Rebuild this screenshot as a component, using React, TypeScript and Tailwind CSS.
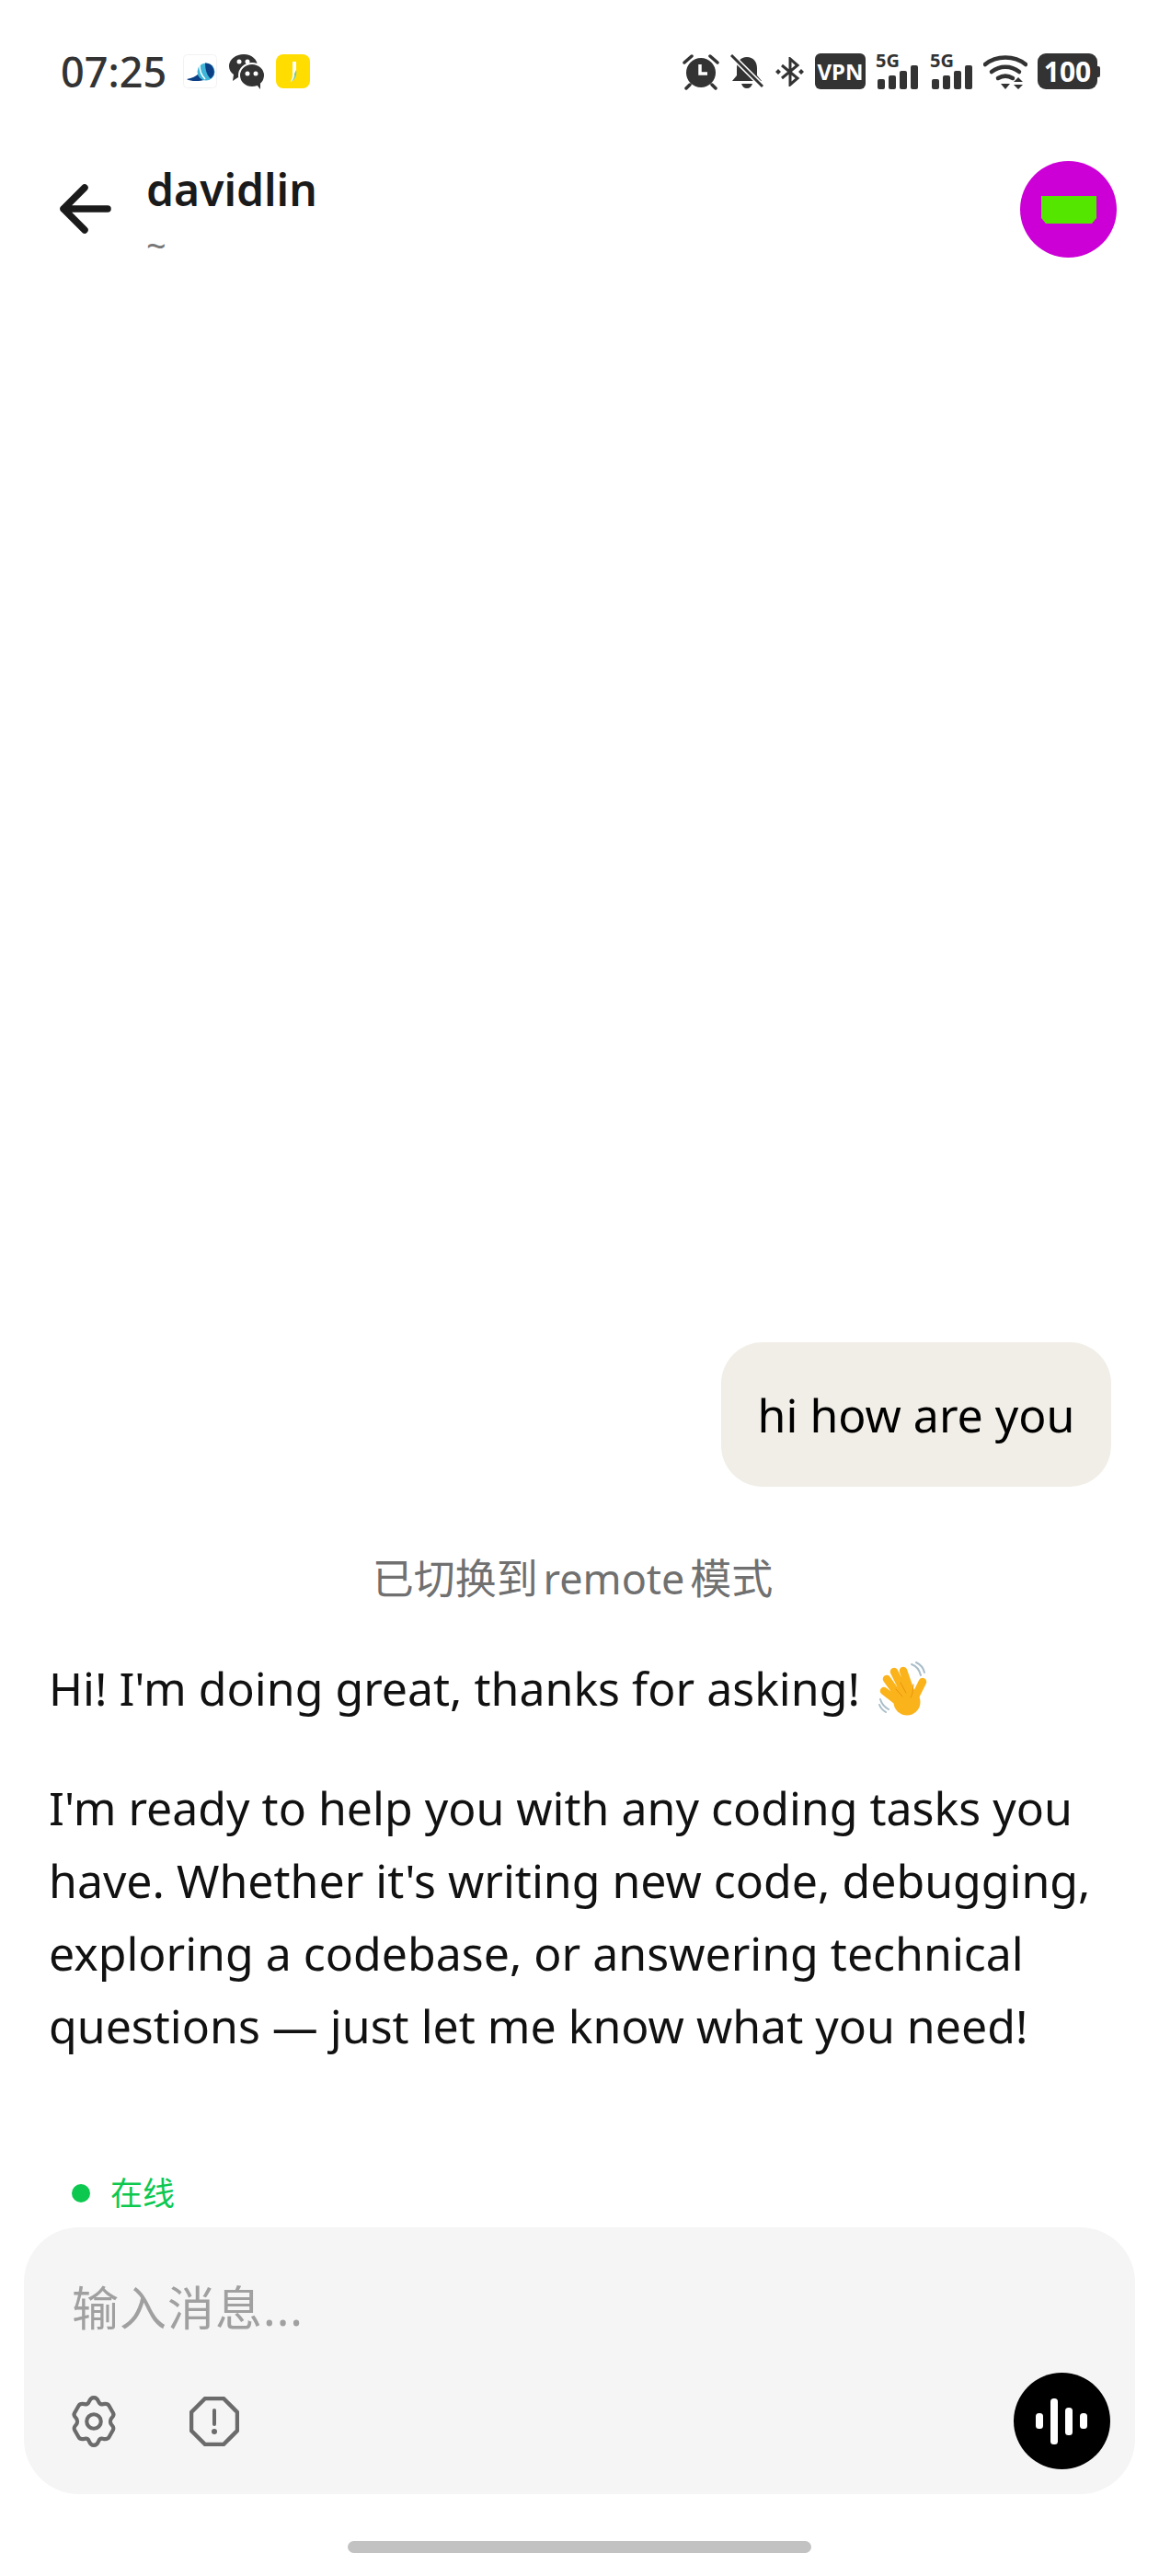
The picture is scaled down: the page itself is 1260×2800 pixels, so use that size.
const sans = "font-['Noto_Sans','Noto_Sans_CJK_SC',sans-serif]";

function StatusIcons() {
  return (
    <div className="flex items-center text-[#333]">
      <svg className="h-[40px] w-[40px]" viewBox="0 0 40 40">
        <circle cx="20" cy="21" r="16" fill="#333" />
        <path d="M19 12v10h8" fill="none" stroke="#fff" strokeWidth="3.5" />
        <path d="M2 10l8-7M38 10l-8-7M8 34l-4 4M32 34l4 4" stroke="#333" strokeWidth="3.5" strokeLinecap="round" />
      </svg>
      <svg className="ml-[12px] h-[38px] w-[36px]" viewBox="0 0 36 38">
        <path d="M18 3c7 0 11 5 11 12v8l5 6H2l5-6v-8C7 8 11 3 18 3z" fill="#333" />
        <path d="M12 32h12c-1 3-3 5-6 5s-5-2-6-5z" fill="#333" />
        <path d="M1 1l34 34" stroke="#fff" strokeWidth="6" />
        <path d="M1 1l34 34" stroke="#333" strokeWidth="3" />
      </svg>
      <svg className="ml-[12px] h-[32px] w-[33px]" viewBox="0 0 33 32">
        <path d="M8 9l17 14-8 7V2l8 7L8 23" fill="none" stroke="#333" strokeWidth="3" />
        <path d="M1 16l3-3 3 3-3 3zM26 16l3-3 3 3-3 3z" fill="#333" />
      </svg>
      <div className={`ml-[11px] flex h-[39px] w-[55px] items-center justify-center rounded-[6px] bg-[#333] text-[24px] font-bold text-white ${sans}`}>
        VPN
      </div>
      <Signal className="ml-[11px]" />
      <Signal className="ml-[12px]" />
      <svg className="ml-[11px] h-[40px] w-[48px]" viewBox="0 0 48 40">
        <path d="M2 12C14 2 34 2 46 12" fill="none" stroke="#333" strokeWidth="4.500" strokeLinecap="round" />
        <path d="M9 20c9-7 21-7 30 0" fill="none" stroke="#333" strokeWidth="4.500" strokeLinecap="round" />
        <path d="M16 27c5-3 11-3 16 0" fill="none" stroke="#333" strokeWidth="4.500" strokeLinecap="round" />
        <path d="M19 33h10l-5 6zM38 26l5 5H33zM38 39l5-5H33z" fill="#333" />
      </svg>
      <div className="ml-[11px] flex items-center">
        <div className={`flex h-[39px] w-[65px] items-center justify-center rounded-[9px] bg-[#333] text-[30px] font-bold text-white ${sans}`}>
          100
        </div>
        <div className="h-[12px] w-[3px] rounded-r-[2px] bg-[#333]" />
      </div>
    </div>
  );
}

function Signal({ className }: { className: string }) {
  return (
    <div className={`relative h-[39px] w-[47px] ${className}`}>
      <span className={`absolute left-0 top-[-3px] text-[20px] leading-[22px] font-bold text-[#333] ${sans}`}>5G</span>
      <div className="absolute inset-x-0 bottom-0 flex items-end gap-[4px] pl-[2px]">
        <div className="h-[11px] w-[8px] rounded-[2px] bg-[#333]" />
        <div className="h-[15px] w-[8px] rounded-[2px] bg-[#333]" />
        <div className="h-[20px] w-[8px] rounded-[2px] bg-[#333]" />
        <div className="h-[26px] w-[8px] rounded-[2px] bg-[#333]" />
      </div>
    </div>
  );
}

function NotificationIcons() {
  return (
    <div className="ml-[18px] flex items-center gap-[13px]">
      <svg className="h-[37px] w-[37px]" viewBox="0 0 37 37">
        <rect x="0.500" y="0.500" width="36" height="36" rx="4" fill="#fff" stroke="#f2f2f2" />
        <path d="M4 27c6-1 10-3 13-6l6 7c-3 1-15 2-19-1z" fill="#0b3f86" />
        <circle cx="25" cy="19" r="9.500" fill="#3fb6d8" />
        <path d="M24 9.500a9.500 9.500 0 0 1 6 17c-4-3-6-10-6-17z" fill="#0b3f86" />
        <path d="M18 12c0 5 2 11 6 15" fill="none" stroke="#fff" strokeWidth="1.500" />
      </svg>
      <svg className="h-[38px] w-[38px]" viewBox="0 0 38 38">
        <path d="M16 0C7 0 0 6 0 13c0 4 2 7 5 9l-1 7 6-4c2 1 4 1 6 1 9 0 15-6 15-13S25 0 16 0z" fill="#333" />
        <ellipse cx="25" cy="23" rx="14" ry="13" fill="#333" stroke="#fff" strokeWidth="2" />
        <path d="M30 33l4 5v-7z" fill="#333" />
        <circle cx="11" cy="8" r="2.500" fill="#fff" />
        <circle cx="20" cy="8" r="2.500" fill="#fff" />
        <circle cx="20" cy="21" r="2.500" fill="#fff" />
        <circle cx="29" cy="21" r="2.500" fill="#fff" />
      </svg>
      <svg className="h-[37px] w-[37px]" viewBox="0 0 37 37">
        <rect width="37" height="37" rx="8" fill="#ffdd00" />
        <path d="M18 8h4v12c0 5-2 8-6 10 1-3 2-4 2-8z" fill="#fff" />
        <path d="M22 17c1 6-1 11-6 13 3-2 4-5 4-9z" fill="#7cc7a0" />
      </svg>
    </div>
  );
}

function WaveHand() {
  return (
    <svg className="ml-[20px] h-[60px] w-[54px] shrink-0" viewBox="28 15 54 60">
      <path d="M64 18q8 3 10 12M69 16q7 3 9 11M30 56q2 7 9 11M29 62q2 5 7 8" fill="none" stroke="#a9bdc9" strokeWidth="2" strokeLinecap="round" />
      <g fill="none" stroke="#fbb31c" strokeWidth="8.500" strokeLinecap="round">
        <path d="M34 47l18 14M37 34l15 21M45 26l12 24M55 25l8 23M76 37l-9 18" />
      </g>
      <circle cx="59" cy="59" r="14.500" fill="#fbb31c" />
      <path d="M47 45l7 8M52 38l6 11M66 40c-1 6 0 9-3 14" fill="none" stroke="#e8920c" strokeWidth="1" strokeLinecap="round" />
    </svg>
  );
}

export default function App() {
  return (
    <div className={`flex h-[2800px] w-[1260px] flex-col overflow-hidden bg-white ${sans}`}>
      <div className="flex h-[155px] shrink-0 items-center pl-[66px] pr-[64px]">
        <div className="flex items-center">
          <span className="text-[45px] font-medium leading-none text-[#333]">07:25</span>
          <NotificationIcons />
        </div>
        <div className="ml-auto">
          <StatusIcons />
        </div>
      </div>

      <div className="flex h-[145px] shrink-0 items-start pl-[62px] pr-[46px]">
        <svg className="mt-[41px] h-[60px] w-[60px]" viewBox="0 0 60 60" fill="none" stroke="#1a1a1a" strokeWidth="7.500" strokeLinecap="round" strokeLinejoin="round">
          <path d="M55 31H7M30 8L7 31l23 23" />
        </svg>
        <div className="ml-[37px] flex flex-col">
          <span className="mt-[20px] text-[48px] font-semibold leading-[62px] text-[#1a1a1a]">davidlin</span>
          <span className="mt-[14px] text-[38px] leading-[30px] text-[#777]">~</span>
        </div>
        <div className="ml-auto mt-[20px] flex h-[105px] w-[105px] items-center justify-center rounded-full bg-[#cc00d6]">
          <svg className="h-[30px] w-[60px]" viewBox="0 0 60 30">
            <path d="M0 0h60v24l-5 6H5l-5-6z" fill="#55e600" />
          </svg>
        </div>
      </div>

      <div className="flex flex-1 flex-col justify-end pl-[53px] pr-[52px]">
        <div className="flex justify-end">
          <div className="flex h-[157px] w-[424px] items-center justify-center rounded-[45px] bg-[#f1eee7] text-[50px] leading-none text-black">
            hi how are you
          </div>
        </div>
        <div className="mt-[78px] pr-[16px] text-center text-[45px] leading-[44px] text-[#707070] [word-spacing:-6px]">
          已切换到 remote 模式
        </div>
        <div className="mt-[58px] flex items-center text-[50px] leading-[79px] text-[#111]">
          Hi! I'm doing great, thanks for asking!
          <WaveHand />
        </div>
        <p className="mt-[51px] text-[50px] leading-[79px] text-[#111]">
          I'm ready to help you with any coding tasks you
          <br />
          have. Whether it's writing new code, debugging,
          <br />
          exploring a codebase, or answering technical
          <br />
          questions — just let me know what you need!
        </p>
        <div className="ml-[25px] mt-[119px] flex items-center">
          <div className="h-[20px] w-[20px] rounded-full bg-[#0cc84f]" />
          <span className="ml-[22px] text-[35px] leading-[46px] text-[#0cc84f]">在线</span>
        </div>
      </div>

      <div className="mx-[26px] mt-[14px] flex h-[290px] shrink-0 flex-col rounded-[60px] bg-[#f5f5f5] pl-[52px] pr-[27px]">
        <div className="mt-[58px] text-[51px] leading-[58px] tracking-[1px] text-[#a0a0a0]">输入消息...</div>
        <div className="mt-[42px] flex items-center">
          <svg className="-ml-[7px] h-[62px] w-[62px]" viewBox="0 0 24 24" fill="none" stroke="#6b6b6b" strokeWidth="1.600" strokeLinejoin="round">
            <path d="M12 2c1 0 1.700.9 2 1.700.3.800 1.100 1.200 1.900 1 .9-.2 2-.2 2.500.7l1.700 3c.5.800-.1 1.700-.7 2.300-.6.700-.6 1.900 0 2.600.6.600 1.200 1.500.7 2.300l-1.700 3c-.5.900-1.600.9-2.500.7-.8-.2-1.600.2-1.900 1-.3.800-1 1.700-2 1.700s-1.700-.9-2-1.700c-.3-.8-1.100-1.200-1.900-1-.9.200-2 .2-2.500-.7l-1.700-3c-.5-.8.100-1.700.7-2.300.6-.7.600-1.900 0-2.600-.6-.6-1.200-1.500-.7-2.300l1.700-3c.5-.9 1.600-.9 2.500-.7.800.2 1.600-.2 1.900-1 .3-.8 1-1.700 2-1.700z" />
            <circle cx="12" cy="12" r="3" />
          </svg>
          <svg className="ml-[73px] h-[54px] w-[54px]" viewBox="0 0 54 54" fill="none" stroke="#6b6b6b" strokeWidth="4.500" strokeLinejoin="round">
            <path d="M17 2h20l15 15v20L37 52H17L2 37V17z" />
            <path d="M27 15v15" strokeLinecap="round" strokeWidth="4" />
            <circle cx="27" cy="38" r="3" fill="#6b6b6b" stroke="none" />
          </svg>
          <div className="ml-auto flex h-[105px] w-[105px] items-center justify-center rounded-full bg-black">
            <svg className="h-[52px] w-[58px]" viewBox="0 0 58 52" fill="#fff">
              <rect x="0" y="17" width="8" height="17" rx="3.500" />
              <rect x="16" y="1" width="8" height="50" rx="3.500" />
              <rect x="32" y="11" width="8" height="30" rx="3.500" />
              <rect x="48" y="17" width="8" height="17" rx="3.500" />
            </svg>
          </div>
        </div>
      </div>

      <div className="flex h-[89px] shrink-0 justify-center pt-[51px]">
        <div className="h-[13px] w-[504px] rounded-full bg-[#c2c2c2]" />
      </div>
    </div>
  );
}
